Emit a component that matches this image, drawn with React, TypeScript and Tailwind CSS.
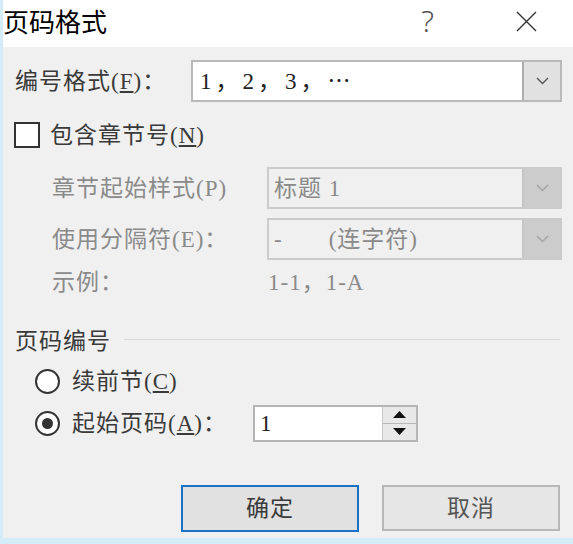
import React from "react";

function Chevron({ color }: { color: string }) {
  return (
    <svg width="13" height="8" viewBox="0 0 13 8">
      <path d="M1 1 L6.5 6.5 L12 1" fill="none" stroke={color} strokeWidth="1.4" />
    </svg>
  );
}

function DisabledSelect({ children }: { children: React.ReactNode }) {
  return (
    <div className="w-[295px] h-[42px] border-2 border-[#cbcbcb] bg-[#f0f0f0] flex items-stretch">
      <div className="flex-1 flex items-center pl-[5px] text-[#8a8a8a]">{children}</div>
      <div className="w-[38px] bg-[#cccccc] border-l-2 border-[#c4c4c4] flex items-center justify-center">
        <Chevron color="#a3a3a3" />
      </div>
    </div>
  );
}

export default function App() {
  return (
    <div className="w-[573px] h-[544px] bg-[#f0f0f0] border-l-[3px] border-b-[6px] border-[#d3ecf8] flex flex-col overflow-hidden">
      <div className="h-[47px] shrink-0 bg-white flex items-center pb-[5px]">
        <span className="font-['Noto_Sans_CJK_SC',sans-serif] text-[26px] leading-none text-black">页码格式</span>
        <span className="ml-auto font-['Noto_Sans','Noto_Sans_CJK_SC',sans-serif] text-[30px] leading-none text-[#555] font-light">?</span>
        <svg className="ml-[80px] mr-[34px]" width="25" height="25" viewBox="0 0 25 25">
          <path d="M3 3 L22 22 M22 3 L3 22" stroke="#333" strokeWidth="1.4" />
        </svg>
      </div>

      <div className="flex-1 flex flex-col font-['Liberation_Serif','Noto_Sans_CJK_SC',serif] text-[23px] tracking-[1px] text-[#3a3a3a] leading-none">
        {/* Row 1 */}
        <div className="mt-[13px] h-[42px] flex items-center">
          <div className="pl-[12px] w-[188px] shrink-0">
            编号格式(<span className="underline underline-offset-2">F</span>)：
          </div>
          <div className="w-[371px] h-[42px] border-2 border-[#b9b9b9] bg-white flex items-stretch">
            <div className="flex-1 flex items-center pl-[7px] text-[#222] tracking-[4px]">1，2，3，⋯</div>
            <div className="w-[38px] bg-[#e1e1e1] border-l-2 border-[#acacac] flex items-center justify-center">
              <Chevron color="#555" />
            </div>
          </div>
        </div>

        {/* Row 2 */}
        <div className="mt-[12px] h-[42px] flex items-center pl-[11px]">
          <div className="w-[26px] h-[26px] border-2 border-[#333] bg-white shrink-0" />
          <span className="ml-[10px]">
            包含章节号(<span className="underline underline-offset-2">N</span>)
          </span>
        </div>

        {/* Row 3 */}
        <div className="mt-[11px] h-[42px] flex items-center text-[#8a8a8a]">
          <div className="pl-[49px] w-[264px] shrink-0">章节起始样式(P)</div>
          <DisabledSelect>标题 1</DisabledSelect>
        </div>

        {/* Row 4 */}
        <div className="mt-[9px] h-[42px] flex items-center text-[#8a8a8a]">
          <div className="pl-[49px] w-[264px] shrink-0">使用分隔符(E)：</div>
          <DisabledSelect>
            <span>-</span>
            <span className="ml-[46px]">(连字符)</span>
          </DisabledSelect>
        </div>

        {/* Row 5 */}
        <div className="mt-[7px] h-[30px] flex items-center text-[#8a8a8a]">
          <div className="pl-[49px] w-[265px] shrink-0">示例：</div>
          <div>1-1，1-A</div>
        </div>

        {/* Section header */}
        <div className="mt-[29px] h-[30px] flex items-center">
          <div className="pl-[12px] shrink-0">页码编号</div>
          <div className="flex-1 h-px bg-[#dadada] ml-[13px] mr-[13px] mb-[4px]" />
        </div>

        {/* Radio 1 */}
        <div className="mt-[10px] h-[30px] flex items-center pl-[32px]">
          <div className="w-[25px] h-[25px] rounded-full border-2 border-[#333] bg-white shrink-0" />
          <span className="ml-[12px]">
            续前节(<span className="underline underline-offset-2">C</span>)
          </span>
        </div>

        {/* Radio 2 */}
        <div className="mt-[7px] h-[40px] flex items-center pl-[32px]">
          <div className="w-[25px] h-[25px] rounded-full border-2 border-[#333] bg-white shrink-0 flex items-center justify-center">
            <div className="w-[11px] h-[11px] rounded-full bg-[#333]" />
          </div>
          <div className="ml-[12px] w-[181px] shrink-0">
            起始页码(<span className="underline underline-offset-2">A</span>)：
          </div>
          <div className="w-[165px] h-[37px] border-2 border-[#b5b5b5] bg-white flex items-stretch">
            <div className="flex-1 flex items-center pl-[5px] text-[#222]">1</div>
            <div className="w-[34px] flex flex-col border-l border-[#c8c8c8]">
              <div className="flex-1 bg-[#e8e8e8] border-b border-[#b8b8b8] flex items-center justify-center">
                <svg width="13" height="7" viewBox="0 0 13 7">
                  <path d="M0 7 L6.5 0 L13 7 Z" fill="#111" />
                </svg>
              </div>
              <div className="flex-1 bg-[#e8e8e8] flex items-center justify-center">
                <svg width="13" height="7" viewBox="0 0 13 7">
                  <path d="M0 0 L6.5 7 L13 0 Z" fill="#111" />
                </svg>
              </div>
            </div>
          </div>
        </div>

        {/* Buttons */}
        <div className="mt-[42px] flex items-start pl-[178px] gap-[23px]">
          <div className="w-[178px] h-[47px] border-2 border-[#1a72c4] bg-[#e1e1e1] flex items-center justify-center">
            确定
          </div>
          <div className="w-[178px] h-[46px] border-2 border-[#b8b8b8] bg-[#e6e6e6] flex items-center justify-center text-[#555]">
            取消
          </div>
        </div>
      </div>
    </div>
  );
}
